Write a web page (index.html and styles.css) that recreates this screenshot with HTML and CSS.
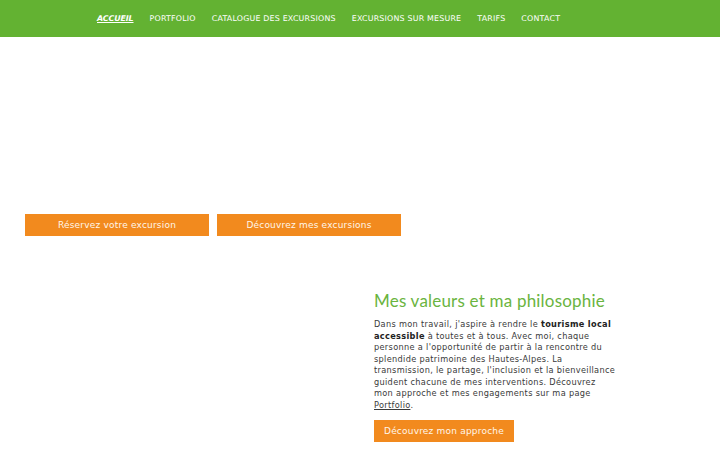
FILE: index.html
```html
<!DOCTYPE html>
<html lang="fr">
<head>
    <meta charset="UTF-8">
    <meta name="viewport" content="width=device-width, initial-scale=1.0">
    <title>Accueil</title>
    <link rel="stylesheet" href="styles.css">
</head>
<body>
    <header class="topbar">
        <nav class="menu">
            <a class="active" href="#">Accueil</a>
            <a href="#">Portfolio</a>
            <a href="#">Catalogue des excursions</a>
            <a href="#">Excursions sur mesure</a>
            <a href="#">Tarifs</a>
            <a href="#">Contact</a>
        </nav>
    </header>

    <section class="hero">
        <div class="hero-actions">
            <a class="btn btn-wide" href="#">Réservez votre excursion</a>
            <a class="btn btn-wide" href="#">Découvrez mes excursions</a>
        </div>
    </section>

    <section class="values">
        <div class="values-media"></div>
        <div class="values-text">
            <h2>Mes valeurs et ma philosophie</h2>
            <p>Dans mon travail, j'aspire à rendre le <strong>tourisme local accessible</strong> à toutes et à tous. Avec moi, chaque personne a l'opportunité de partir à la rencontre du splendide patrimoine des Hautes-Alpes. La transmission, le partage, l'inclusion et la bienveillance guident chacune de mes interventions. Découvrez mon approche et mes engagements sur ma page <a href="#">Portfolio</a>.</p>
            <a class="btn" href="#">Découvrez mon approche</a>
        </div>
    </section>
</body>
</html>
```

FILE: styles.css
```css
body {
    margin: 0;
    font-family: "DejaVu Sans", Verdana, sans-serif;
    color: #333;
    background: #fff;
}
a {
    text-decoration: none;
}
.topbar {
    background-color: #63b232;
    height: 37px;
    display: flex;
    align-items: center;
}
.menu {
    display: flex;
    gap: 16px;
    padding-left: 97px;
}
.menu a {
    color: #fff;
    font-size: 7.9px;
    text-transform: uppercase;
    letter-spacing: 0.2px;
}
.menu a.active {
    font-weight: 700;
    font-style: italic;
    letter-spacing: -0.1px;
    text-decoration: underline;
}
.hero {
    padding-top: 177px;
}
.hero-actions {
    display: flex;
    gap: 8px;
    padding-left: 25px;
}
.btn {
    display: inline-block;
    background-color: #f28a1e;
    color: #fff6ea;
    font-size: 9px;
    line-height: 22px;
    height: 22px;
    padding: 0 10px;
    letter-spacing: 0.2px;
}
.btn-wide {
    width: 164px;
    text-align: center;
}
.values {
    display: flex;
    margin-top: 54px;
}
.values-media {
    width: 374px;
}
.values-text {
    width: 243px;
}
.values-text h2 {
    margin: 0 0 8px;
    color: #6ab440;
    font-family: Lato, "Open Sans", sans-serif;
    font-size: 17px;
    font-weight: 400;
    letter-spacing: 0.2px;
}
.values-text p {
    margin: 0 0 8px;
    font-size: 8.2px;
    line-height: 11.5px;
    letter-spacing: 0.32px;
    color: #3a3a3a;
}
.values-text p strong {
    color: #222;
}
.values-text p a {
    color: #3a3a3a;
    text-decoration: underline;
}
```
